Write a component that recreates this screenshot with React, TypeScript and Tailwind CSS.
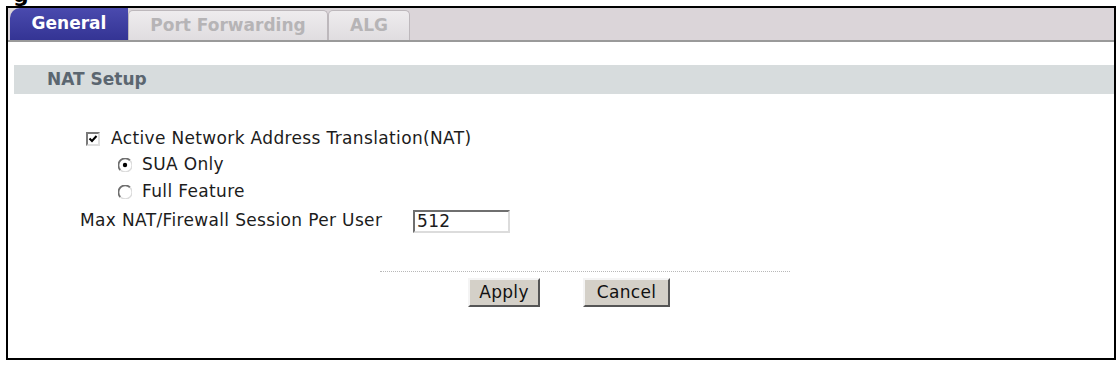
import React from 'react';

// --- small form controls, drawn to look like classic Windows widgets ---
const CheckBox = ({ checked }: { checked?: boolean }) => (
    <span className="inline-flex w-[14px] h-[14px] bg-white border-2 border-t-[#7a7a7a] border-l-[#7a7a7a] border-b-[#dedede] border-r-[#dedede] items-center justify-center">
        {checked && (
            <svg width="10" height="10" viewBox="0 0 10 10">
                <path d="M1.5 4.5 L4 7 L8.5 2" stroke="#000" strokeWidth="2" fill="none" />
            </svg>
        )}
    </span>
);

const Radio = ({ checked }: { checked?: boolean }) => (
    <svg width="14" height="14" viewBox="0 0 14 14" className="shrink-0">
        <circle cx="7" cy="7" r="6.2" fill="#fff" />
        <path d="M12 2.4 A6.2 6.2 0 0 0 2.4 12" stroke="#6e6e6e" strokeWidth="1.8" fill="none" />
        <path d="M2.4 12 A6.2 6.2 0 0 0 12 2.4" stroke="#dcdcdc" strokeWidth="1.4" fill="none" />
        {checked && <circle cx="7" cy="7" r="2.2" fill="#000" />}
    </svg>
);

const ClassicButton = ({ label, width }: { label: string; width: string }) => (
    <button type="button" className={`${width} h-[29px] bg-[#d4d0c8] border-2 border-t-[#f4f4f4] border-l-[#f4f4f4] border-b-[#555] border-r-[#555] text-[17px] tracking-[0.3px] text-[#111] leading-none flex items-center justify-center`}>
        {label}
    </button>
);

// --- Tabs ---
const tabs = [
    { label: 'General', active: true, w: 'w-[118px]' },
    { label: 'Port Forwarding', active: false, w: 'w-[200px]' },
    { label: 'ALG', active: false, w: 'w-[82px]' },
];

export default function App() {
    return (
        <div className="w-[1118px] h-[365px] bg-white overflow-hidden font-['DejaVu_Sans',Verdana,sans-serif] text-[#1c1c1c]">
            {/* cut-off figure caption above the frame */}
            <div className="h-[6px] overflow-hidden pl-[13px]">
                <div className="-mt-[16px] text-[22px] font-bold leading-[22px] text-black">g</div>
            </div>

            <div className="ml-[6px] w-[1110px] h-[354px] border-2 border-black flex flex-col">
                {/* tab strip */}
                <div className="h-[34px] bg-[#dbd5d9] border-b-2 border-[#9a9a9a] flex items-end pl-[2px] shrink-0">
                    {tabs.map((t) =>
                        t.active ? (
                            <div key={t.label} className={`${t.w} h-[32px] rounded-tl-[10px] bg-gradient-to-b from-[#4a4aae] to-[#343494] text-white font-bold text-[17px] flex items-center justify-center`}>
                                {t.label}
                            </div>
                        ) : (
                            <div key={t.label} className={`${t.w} h-[30px] rounded-t-[5px] bg-gradient-to-b from-[#eeecee] to-[#e0dde0] border-x border-t border-[#bdb8bc] text-[#b6b4b6] font-bold text-[17px] flex items-center justify-center`}>
                                {t.label}
                            </div>
                        )
                    )}
                </div>

                {/* section header */}
                <div className="mt-[23px] ml-[6px] h-[29px] bg-[#d7dcdd] flex items-center pl-[33px] text-[17px] font-bold text-[#5b6670] shrink-0">
                    NAT Setup
                </div>

                {/* form body */}
                <div className="flex flex-col text-[17px] tracking-[0.35px]">
                    <label className="mt-[33px] h-[24px] flex items-center pl-[78px] gap-[11px]">
                        <CheckBox checked />
                        <span>Active Network Address Translation(NAT)</span>
                    </label>
                    <label className="mt-[2px] h-[24px] flex items-center pl-[110px] gap-[10px]">
                        <Radio checked />
                        <span>SUA Only</span>
                    </label>
                    <label className="mt-[3px] h-[24px] flex items-center pl-[110px] gap-[10px]">
                        <Radio />
                        <span>Full Feature</span>
                    </label>
                    <div className="mt-[5px] h-[24px] flex items-center pl-[72px]">
                        <span className="w-[333px]">Max NAT/Firewall Session Per User</span>
                        <div className="w-[97px] h-[23px] bg-white border-2 border-t-[#6f6f6f] border-l-[#6f6f6f] border-b-[#dcdcdc] border-r-[#dcdcdc] pl-[2px] flex items-center leading-none">
                            512
                        </div>
                    </div>

                    <div className="mt-[38px] ml-[372px] w-[410px] border-t border-dotted border-[#b8b8b8]" />

                    <div className="mt-[6px] flex pl-[460px] gap-[43px]">
                        <ClassicButton label="Apply" width="w-[72px]" />
                        <ClassicButton label="Cancel" width="w-[87px]" />
                    </div>
                </div>
            </div>
        </div>
    );
}
